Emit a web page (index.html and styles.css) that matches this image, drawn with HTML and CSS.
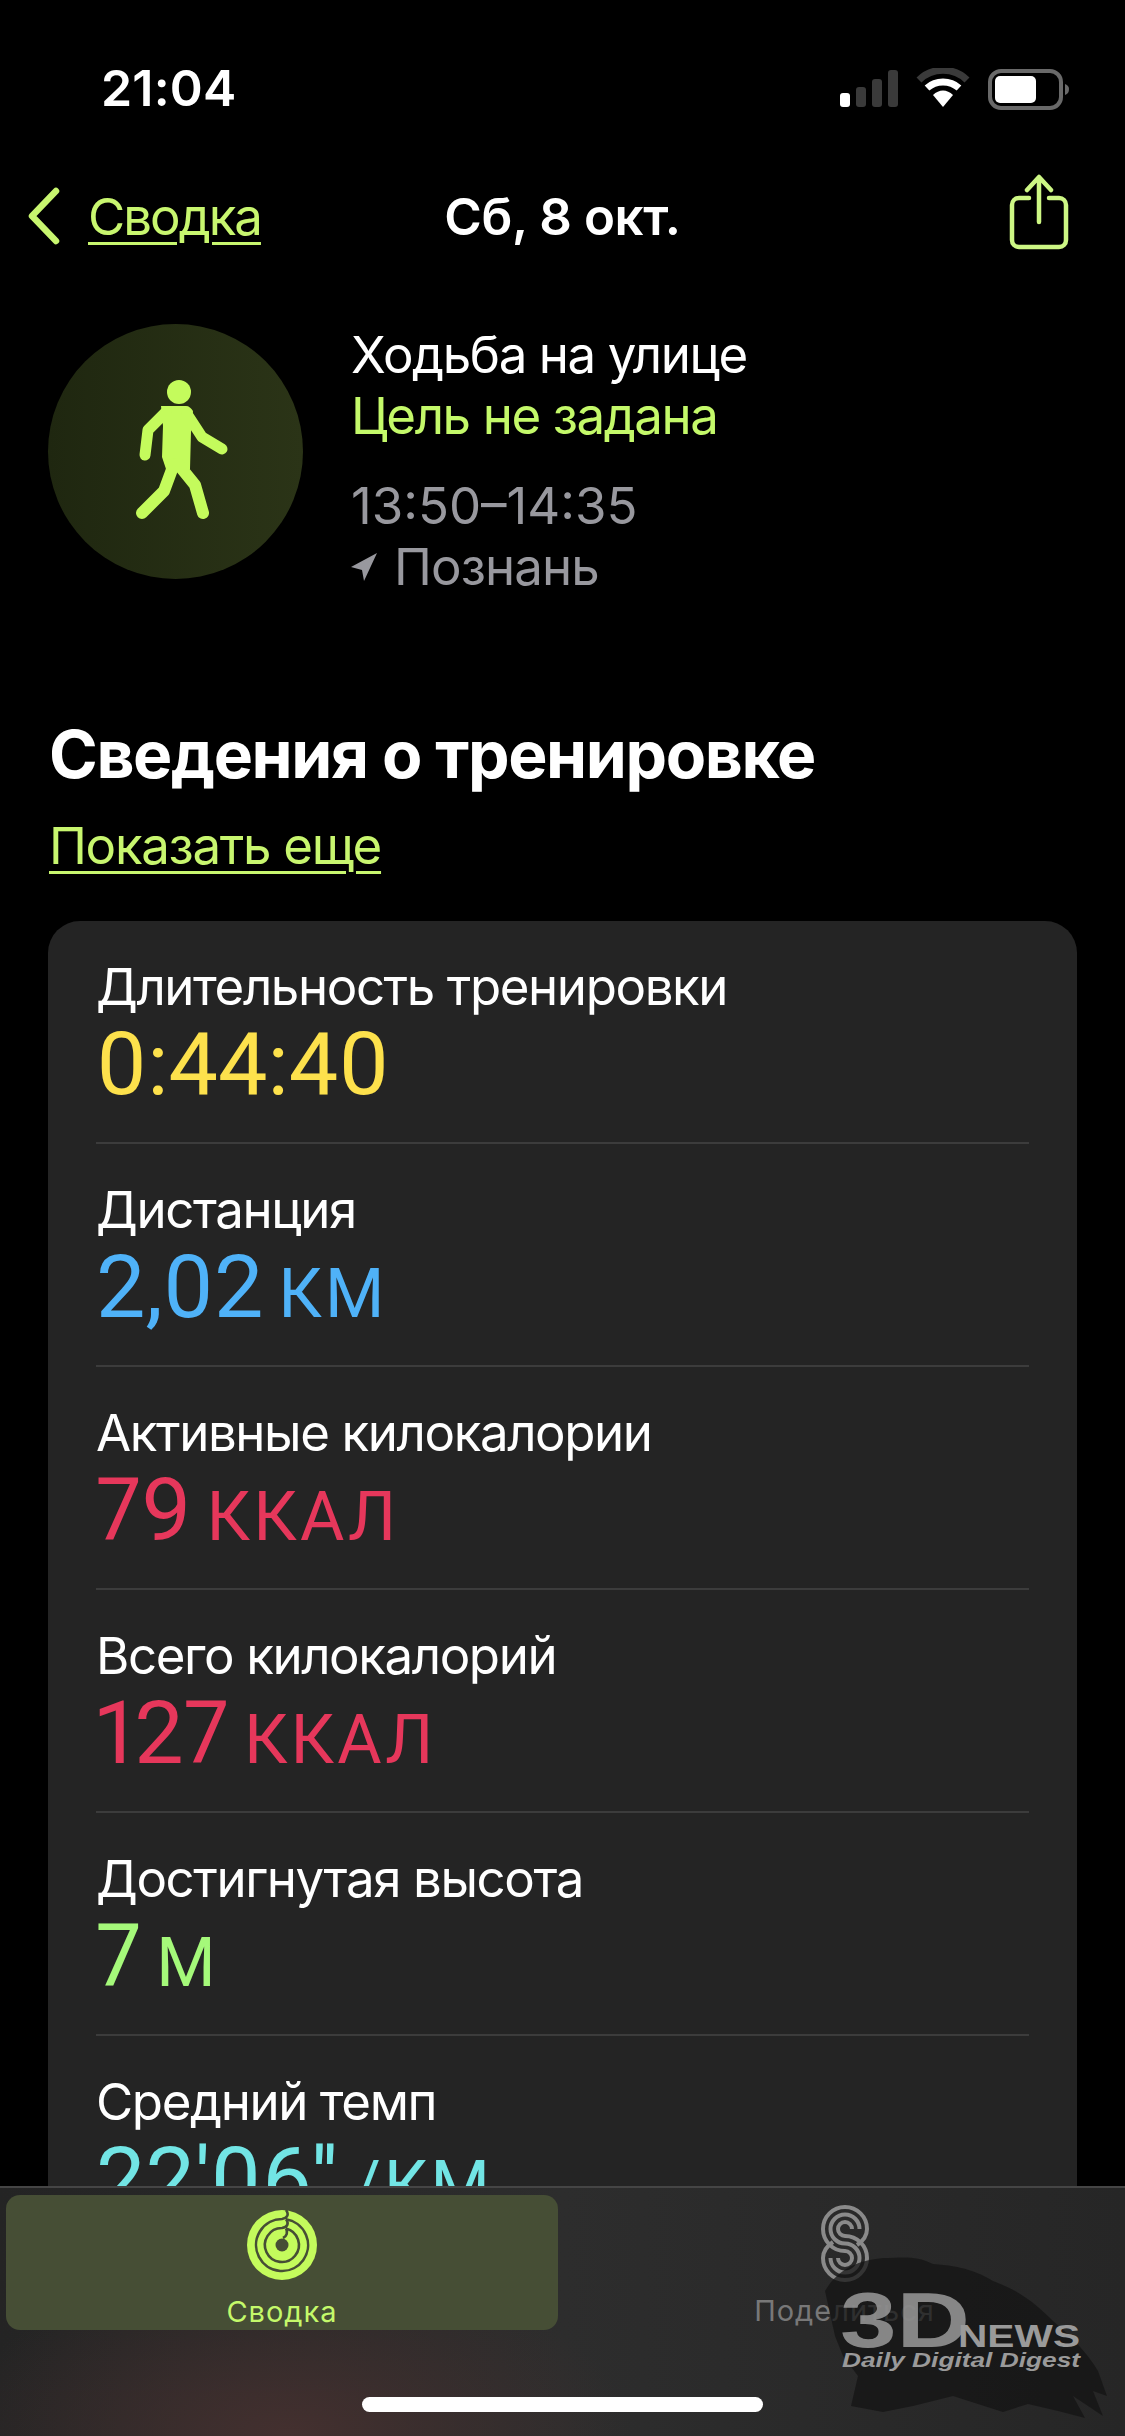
FILE: index.html
```html
<!DOCTYPE html>
<html lang="ru">
<head>
    <meta charset="UTF-8">
    <meta name="viewport" content="width=device-width, initial-scale=1.0">
    <title>Сводка - Ходьба на улице</title>
    <link rel="stylesheet" href="styles.css">
</head>
<body>
    <div class="status">
        <span class="time">21:04</span>
        <svg class="status-icons" width="232" height="44" viewBox="0 0 232 44">
            <rect x="3" y="25" width="10" height="14" rx="3" fill="#fff"/>
            <rect x="19" y="19" width="10" height="20" rx="3" fill="#3a3a3a"/>
            <rect x="35" y="11" width="10" height="28" rx="3" fill="#3a3a3a"/>
            <rect x="51" y="2" width="10" height="37" rx="3" fill="#3a3a3a"/>
            <path d="M82 12C95 -1 117 -1 130 12" fill="none" stroke="#3a3a3a" stroke-width="7"/>
            <path d="M90 20C99 12 113 12 122 20" fill="none" stroke="#fff" stroke-width="7"/>
            <path d="M96 27C102 21 110 21 116 27L106 39Z" fill="#fff"/>
            <rect x="153" y="3" width="71" height="37" rx="11" fill="none" stroke="#696969" stroke-width="4"/>
            <rect x="158" y="8" width="41" height="27" rx="5" fill="#fff"/>
            <path d="M228 16C231 17 232 19 232 21C232 24 231 26 228 27Z" fill="#696969"/>
        </svg>
    </div>

    <div class="nav">
        <div class="back">
            <svg width="34" height="58" viewBox="0 0 34 58">
                <path d="M29 4L5 29L29 54" fill="none" stroke="#c8f66f" stroke-width="6.5" stroke-linecap="round" stroke-linejoin="round"/>
            </svg>
            <a class="link">Сводка</a>
        </div>
        <div class="nav-title">Сб, 8 окт.</div>
        <svg class="share" width="60" height="76" viewBox="0 0 60 76">
            <path d="M20 24H10C6 24 3 27 3 31V66C3 70 6 73 10 73H50C54 73 57 70 57 66V31C57 27 54 24 50 24H40" fill="none" stroke="#cdf784" stroke-width="4.5" stroke-linecap="round"/>
            <path d="M30 48V4M18 16L30 3L42 16" fill="none" stroke="#cdf784" stroke-width="4.5" stroke-linecap="round" stroke-linejoin="round"/>
        </svg>
    </div>

    <div class="hero">
        <div class="hero-circle">
            <svg width="255" height="255" viewBox="0 0 255 255">
                <circle cx="131" cy="68" r="12" fill="#c4fb5c"/>
                <path d="M113 82H138C141 82 143 84 145 87L143 108L142 145H118L114 133L115 102Z" fill="#c4fb5c"/>
                <g fill="none" stroke="#c4fb5c" stroke-linecap="round" stroke-linejoin="round">
                    <path d="M118 88L100 106L97 131" stroke-width="11"/>
                    <path d="M139 90L154 113L174 125" stroke-width="11"/>
                    <path d="M126 140L116 167L94 189" stroke-width="12"/>
                    <path d="M130 140L147 161L155 189" stroke-width="12"/>
                </g>
            </svg>
        </div>
        <div class="hero-text">
            <div class="hero-group">
                <div>Ходьба на улице</div>
                <div class="goal">Цель не задана</div>
            </div>
            <div class="hero-group muted">
                <div class="hero-time">13:50–14:35</div>
                <div class="place">
                    <svg width="26" height="28" viewBox="0 0 26 28">
                        <path d="M26 0L0 14L11 17L13 28Z" fill="#98989e"/>
                    </svg>
                    Познань
                </div>
            </div>
        </div>
    </div>

    <div class="section-head">
        <h2>Сведения о тренировке</h2>
        <a class="link">Показать еще</a>
    </div>

    <div class="content">
        <div class="card">
            <div class="row">
                <div class="row-label">Длительность тренировки</div>
                <div class="row-value yellow">0:44:40</div>
            </div>
            <div class="row">
                <div class="row-label">Дистанция</div>
                <div class="row-value blue">2,02 <span class="unit">км</span></div>
            </div>
            <div class="row">
                <div class="row-label">Активные килокалории</div>
                <div class="row-value red">79 <span class="unit">ккал</span></div>
            </div>
            <div class="row">
                <div class="row-label">Всего килокалорий</div>
                <div class="row-value red">127 <span class="unit">ккал</span></div>
            </div>
            <div class="row">
                <div class="row-label">Достигнутая высота</div>
                <div class="row-value green">7 <span class="unit">м</span></div>
            </div>
            <div class="row">
                <div class="row-label">Средний темп</div>
                <div class="row-value cyan">22'06'' <span class="unit">/км</span></div>
            </div>
        </div>
    </div>

    <div class="tabbar">
        <div class="tab tab-active">
            <svg width="70" height="70" viewBox="0 0 70 70">
                <circle cx="35" cy="35" r="35" fill="#c4fb5c"/>
                <g fill="none" stroke="#464e35" stroke-width="2.6">
                    <path d="M39 0C42 4 41 8 35 9A26 26 0 1 0 39 9.300"/>
                    <path d="M39 9.300C42 13 41 17 35 18A17 17 0 1 0 39 18.500"/>
                    <path d="M39 18.500C41 22 40 26 36 28"/>
                </g>
                <circle cx="35" cy="35" r="6.500" fill="#464e35"/>
            </svg>
            <span>Сводка</span>
        </div>
        <div class="tab tab-share">
            <svg width="48" height="77" viewBox="0 0 48 77">
                <g fill="none" stroke="#8a8a8a" stroke-width="4">
                    <path d="M46 24A22 22 0 1 0 24 46A7 7 0 1 1 17 53"/>
                    <path d="M38.500 24A14.500 14.500 0 1 0 24 38.500A14.500 14.500 0 1 1 9.500 53"/>
                    <path d="M31 24A7 7 0 1 0 24 31A22 22 0 1 1 2 53"/>
                    <path d="M46 24C46 30 42 36 36 40"/>
                    <path d="M2 53C2 47 6 41 12 37"/>
                </g>
            </svg>
            <span>Поделиться</span>
        </div>
        <div class="home-bar"></div>
    </div>

    <svg class="watermark" width="300" height="190" viewBox="0 0 300 190">
        <path class="wm-brush" d="M2 45C12 28 28 15 60 12C80 12 92 9 110 18C140 20 155 26 170 35C200 46 215 60 230 75C250 92 265 108 275 125L284 150L270 145L280 170L250 150L262 172L235 165L205 158L180 166L130 150L90 160L60 166L28 160L35 130L20 110L12 90Z"/>
        <text class="wm-3d" x="17" y="101" textLength="130" lengthAdjust="spacingAndGlyphs">3D</text>
        <text class="wm-news" x="135" y="101" textLength="122" lengthAdjust="spacingAndGlyphs">NEWS</text>
        <text class="wm-tag" x="19" y="121" textLength="238" lengthAdjust="spacingAndGlyphs">Daily Digital Digest</text>
    </svg>
</body>
</html>
```

FILE: styles.css
```css
* {
    box-sizing: border-box;
    margin: 0;
    padding: 0;
}

body {
    position: relative;
    width: 1125px;
    height: 2436px;
    overflow: hidden;
    display: flex;
    flex-direction: column;
    background-color: #000;
    color: #fff;
    font-family: Inter, "Liberation Sans", sans-serif;
    font-size: 51px;
}

.status {
    height: 160px;
    flex-shrink: 0;
    display: flex;
    justify-content: space-between;
    align-items: flex-start;
    padding: 58px 56px 0 101px;
}

.time {
    font-size: 50px;
    font-weight: 600;
    line-height: 60px;
    letter-spacing: 0.2px;
}

.status-icons {
    margin-top: 10px;
}

.nav {
    height: 112px;
    flex-shrink: 0;
    display: grid;
    grid-template-columns: 1fr auto 1fr;
    align-items: center;
    padding: 0 56px;
}

.back {
    display: flex;
    align-items: center;
    gap: 27px;
    margin-left: -29px;
}

.back .link {
    letter-spacing: -2px;
}

.link {
    color: #c8f66f;
    text-decoration: underline;
    text-decoration-thickness: 3px;
    text-underline-offset: 7px;
    letter-spacing: -1.3px;
}

.nav-title {
    font-weight: 600;
    letter-spacing: -0.4px;
}

.share {
    justify-self: end;
    margin-top: -8px;
}

.hero {
    display: flex;
    flex-shrink: 0;
    gap: 48px;
    margin-top: 52px;
    padding-left: 48px;
}

.hero-circle {
    width: 255px;
    height: 255px;
    border-radius: 50%;
    background: linear-gradient(90deg, #1f2710 0%, #2b3417 100%);
}

.hero-text {
    display: flex;
    flex-direction: column;
    gap: 29px;
    line-height: 61px;
    letter-spacing: -1.4px;
}

.goal {
    color: #c4f96a;
}

.muted {
    color: #98989e;
}

.hero-time {
    letter-spacing: 0;
}

.place {
    display: flex;
    align-items: center;
    gap: 17px;
    letter-spacing: -0.9px;
}

.section-head {
    flex-shrink: 0;
    margin-top: 117px;
    padding-left: 49px;
}

.section-head h2 {
    font-size: 66px;
    font-weight: 700;
    line-height: 80px;
    letter-spacing: -1.4px;
}

.section-head .link {
    display: inline-block;
    margin-top: 22px;
    line-height: 60px;
}

.content {
    flex: 1;
    min-height: 0;
    overflow: hidden;
    padding: 0 48px;
    margin-top: 45px;
}

.card {
    background-color: #242424;
    border-radius: 32px;
    padding: 0 48px;
}

.row {
    height: 223px;
    padding-top: 36px;
    border-bottom: 2px solid #3c3c3c;
}

.row:last-child {
    border-bottom: none;
}

.row-label {
    line-height: 60px;
    letter-spacing: -1.4px;
}

.row-value {
    font-family: Roboto, "Liberation Sans", sans-serif;
    font-size: 88px;
    font-variant-numeric: proportional-nums;
    line-height: 100px;
    margin-top: -3px;
    word-spacing: -7px;
}

.unit {
    font-size: 68px;
    text-transform: uppercase;
    letter-spacing: 3px;
}

.yellow { color: #fde14c; }
.blue { color: #4fb2f8; }
.red { color: #e6375b; }
.green { color: #a5f97a; }
.cyan { color: #72e5e5; }

.tabbar {
    position: relative;
    height: 250px;
    flex-shrink: 0;
    display: grid;
    grid-template-columns: 552px 1fr;
    align-items: start;
    padding: 7px 0 0 6px;
    border-top: 2px solid #454545;
    background:
        radial-gradient(ellipse 340px 170px at 290px 100%, #44302f 0%, rgba(68, 48, 47, 0) 100%),
        linear-gradient(90deg, #242424 0%, #2d2d2d 50%, #262626 100%);
}

.tab {
    height: 135px;
    display: flex;
    flex-direction: column;
    align-items: center;
    font-size: 29px;
    letter-spacing: 1px;
}

.tab-active {
    background-color: #464e35;
    border-radius: 14px;
    color: #c4f96a;
    padding-top: 15px;
}

.tab-active span {
    margin-top: 14px;
}

.tab-share {
    color: #787878;
    margin-left: 6px;
    padding-top: 10px;
}

.tab-share span {
    margin-top: 11px;
}

.home-bar {
    position: absolute;
    left: 362px;
    top: 209px;
    width: 401px;
    height: 15px;
    border-radius: 8px;
    background-color: #fff;
}

.watermark {
    position: absolute;
    left: 823px;
    top: 2246px;
}

.wm-brush {
    fill: #141414;
    fill-opacity: 0.72;
}

.wm-3d {
    font-family: "Liberation Sans", sans-serif;
    font-size: 78px;
    font-weight: 700;
    fill: #9a9a9a;
    fill-opacity: 0.85;
}

.wm-news {
    font-family: "Liberation Sans", sans-serif;
    font-size: 31px;
    font-weight: 700;
    fill: #9a9a9a;
}

.wm-tag {
    font-family: "Liberation Sans", sans-serif;
    font-size: 21px;
    font-weight: 700;
    font-style: italic;
    fill: #9a9a9a;
}
```
